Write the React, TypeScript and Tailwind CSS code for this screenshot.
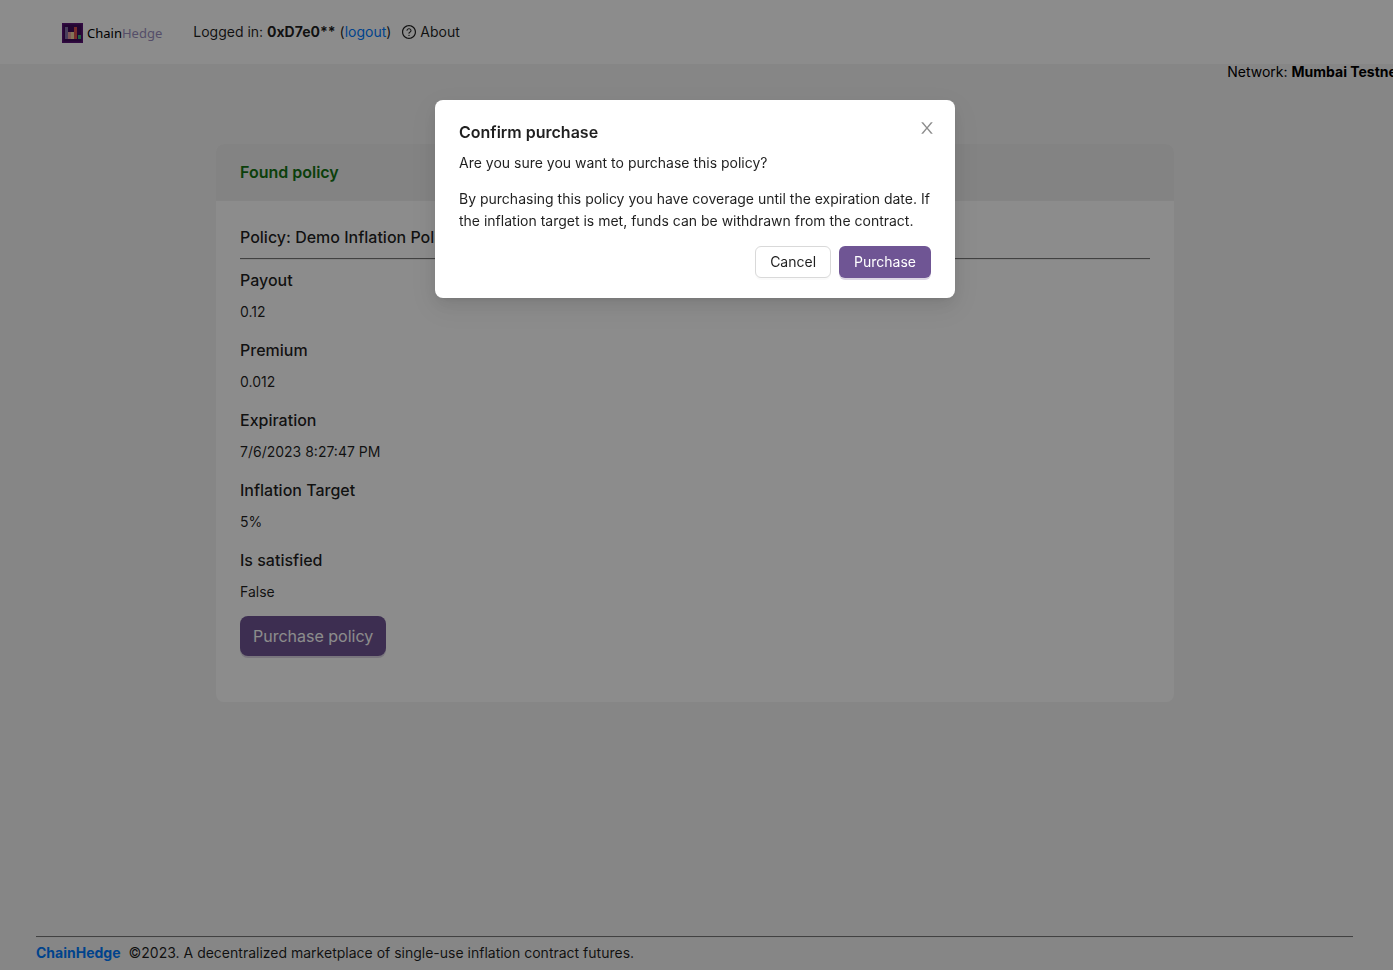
import { AiOutlineQuestionCircle } from "react-icons/ai";

const fields = [
  { label: "Payout", value: "0.12" },
  { label: "Premium", value: "0.012" },
  { label: "Expiration", value: "7/6/2023 8:27:47 PM" },
  { label: "Inflation Target", value: "5%" },
  { label: "Is satisfied", value: "False" },
];

function Logo() {
  return (
    <a href="#" className="flex items-center gap-1 pt-0.5 font-['Noto_Sans',sans-serif] text-[13px] text-black">
      <svg width="21" height="20" viewBox="0 0 21 20" aria-hidden="true">
        <rect width="21" height="20" fill="#5c1578" />
        <rect x="1.5" y="1.5" width="18" height="17" fill="#400b5c" />
        <rect x="3" y="4" width="3" height="12" fill="#8673a8" />
        <rect x="6" y="9" width="3" height="7" fill="#e8a0a0" />
        <rect x="9" y="9" width="3" height="7" fill="#f0d3a0" />
        <rect x="12" y="4" width="3" height="12" fill="#d9504f" />
        <rect x="16" y="12" width="3" height="4" fill="#3fae7d" />
      </svg>
      <span>
        Chain<span className="text-[#9b8fc0]">Hedge</span>
      </span>
    </a>
  );
}

function Header() {
  return (
    <header className="flex h-16 items-center bg-white px-[62px]">
      <Logo />
      <div className="ml-[31px]">
        Logged in: <b>0xD7e0**</b> (
        <a href="#" className="text-[#007bff]">logout</a>)
      </div>
      <a href="#" className="ml-2.5 flex items-center gap-[3px]">
        <AiOutlineQuestionCircle size={16} />
        About
      </a>
    </header>
  );
}

function PolicyCard() {
  return (
    <section className="mx-auto w-full max-w-[958px] rounded-lg bg-white">
      <div className="rounded-t-lg border-b border-[#f0f0f0] bg-[#efefef] px-6 py-4">
        <h2 className="text-base font-semibold leading-6 text-[#147414]">Found policy</h2>
      </div>
      <div className="px-6 pt-6 pb-[46px]">
        <h3 className="mb-[9px] text-base font-medium">Policy: Demo Inflation Policy</h3>
        <hr className="mb-1.5 border-b border-t-[#777] border-b-[#eee]" />
        <dl>
          {fields.map((f) => (
            <div key={f.label} className="mb-[13px]">
              <dt className="mb-[7px] text-base font-medium leading-7">{f.label}</dt>
              <dd className="leading-[22px]">{f.value}</dd>
            </div>
          ))}
        </dl>
        <button className="h-10 rounded-lg bg-[#6f5594] px-[13px] text-base text-white shadow-[0_2px_0_rgba(80,50,120,0.2)]">
          Purchase policy
        </button>
      </div>
    </section>
  );
}

function ConfirmModal() {
  return (
    <div className="fixed inset-0 overflow-auto bg-black/45 pr-[3px]">
      <div
        role="dialog"
        aria-labelledby="confirm-title"
        className="relative mx-auto mt-[100px] w-[520px] rounded-lg bg-white px-6 py-5 shadow-[0_6px_16px_0_rgba(0,0,0,0.08),0_3px_6px_-4px_rgba(0,0,0,0.12),0_9px_28px_8px_rgba(0,0,0,0.05)]"
      >
        <button aria-label="Close" className="absolute top-5 right-5 text-black/45">
          <svg width="16" height="16" viewBox="64 64 896 896" fill="currentColor">
            <path d="M563.8 512l262.5-312.9c4.4-5.2.7-13.1-6.1-13.1h-79.8c-4.7 0-9.2 2.1-12.3 5.7L511.6 449.8 295.1 191.7c-3-3.6-7.5-5.7-12.3-5.7H203c-6.8 0-10.5 7.9-6.1 13.1L459.4 512 196.9 824.9A7.95 7.95 0 0 0 203 838h79.8c4.7 0 9.2-2.1 12.3-5.7l216.5-258.1 216.5 258.1c3 3.6 7.5 5.7 12.3 5.7h79.8c6.8 0 10.5-7.9 6.1-13.1L563.8 512z" />
          </svg>
        </button>
        <h1 id="confirm-title" className="mb-2 text-base font-semibold leading-6">
          Confirm purchase
        </h1>
        <p className="mb-[14px]">Are you sure you want to purchase this policy?</p>
        <p>
          By purchasing this policy you have coverage until the expiration date. If the inflation
          target is met, funds can be withdrawn from the contract.
        </p>
        <div className="mt-[14px] flex justify-end gap-2">
          <button className="h-8 rounded-md border border-[#d9d9d9] bg-white px-3.5 shadow-[0_2px_0_rgba(0,0,0,0.02)]">
            Cancel
          </button>
          <button className="h-8 rounded-md bg-[#6f5594] px-[15px] text-white shadow-[0_2px_0_rgba(80,50,120,0.2)]">
            Purchase
          </button>
        </div>
      </div>
    </div>
  );
}

export default function App() {
  return (
    <div className="flex min-h-screen flex-col overflow-hidden bg-[#f5f5f5] font-['Inter',sans-serif] text-sm leading-[22px] text-black/88">
      <Header />
      <main className="flex-1">
        <div className="-mr-[9px] mb-16 flex justify-end whitespace-pre leading-4 text-black">
          Network: <b>Mumbai Testnet</b>
        </div>
        <div className="pr-[3px]">
          <PolicyCard />
        </div>
      </main>
      <footer className="mr-10 ml-9 pb-1.5">
        <hr className="mb-1 border-b border-t-[#777] border-b-[#eee]" />
        <a href="#" className="mr-2 font-bold text-[#007bff]">ChainHedge</a>
        ©2023. A decentralized marketplace of single-use inflation contract futures.
      </footer>
      <ConfirmModal />
    </div>
  );
}
